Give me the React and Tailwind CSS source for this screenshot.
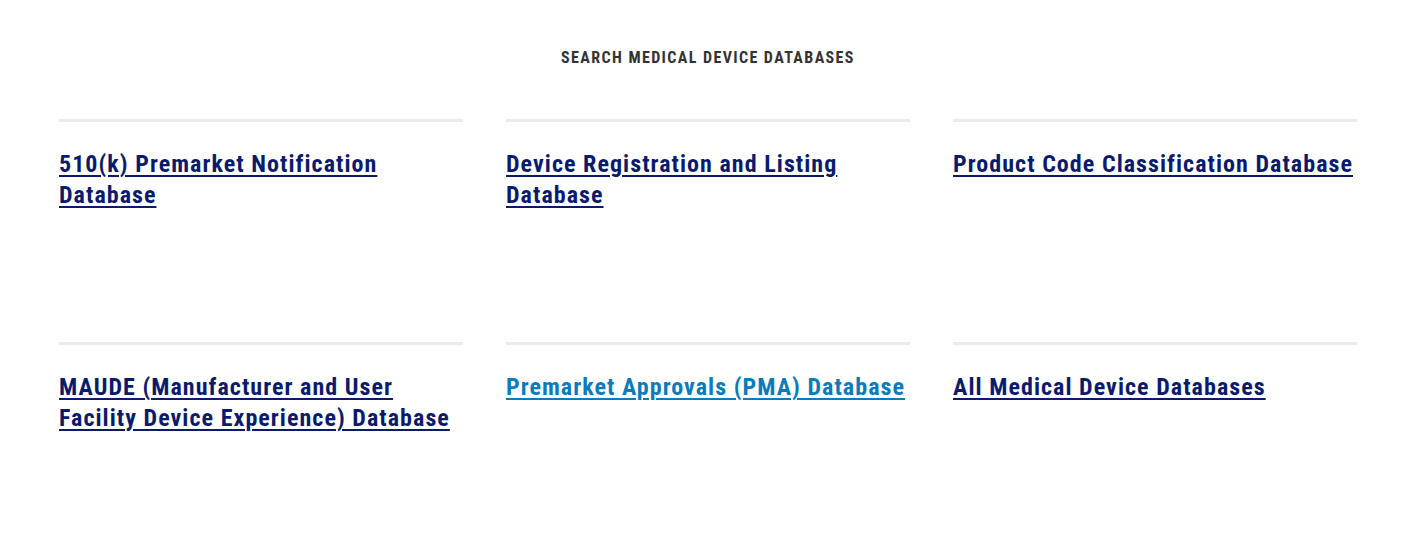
import React from "react";

const items = [
  { t: "510(k) Premarket Notification Database" },
  { t: "Device Registration and Listing Database" },
  { t: "Product Code Classification Database" },
  { t: "MAUDE (Manufacturer and User Facility Device Experience) Database" },
  { t: "Premarket Approvals (PMA) Database", light: true },
  { t: "All Medical Device Databases" },
];

export default function App() {
  return (
    <div className="w-[1426px] h-[535px] bg-white overflow-hidden" style={{ fontFamily: '"Roboto Condensed", Roboto, sans-serif' }}>
      <div className="pl-[59px] pt-[48px]">
        <h2 className="w-[1298px] text-center text-[16px] leading-[20px] font-bold text-[#333333] tracking-[1.4px] uppercase">
          Search Medical Device Databases
        </h2>
        <div className="grid grid-cols-[404px_404px_404px] grid-rows-[223px_auto] gap-x-[43px] mt-[51px]">
          {items.map((it, i) => (
            <div key={i} className="border-t-[3px] border-[#ebebeb] pt-[27px]">
              <a
                href="#"
                className={`text-[24px] leading-[31px] font-bold tracking-[1.05px] underline underline-offset-[3px] decoration-2 ${it.light ? "text-[#0b7bbd]" : "text-[#0a1b6e]"}`}
              >
                {it.t}
              </a>
            </div>
          ))}
        </div>
      </div>
    </div>
  );
}
